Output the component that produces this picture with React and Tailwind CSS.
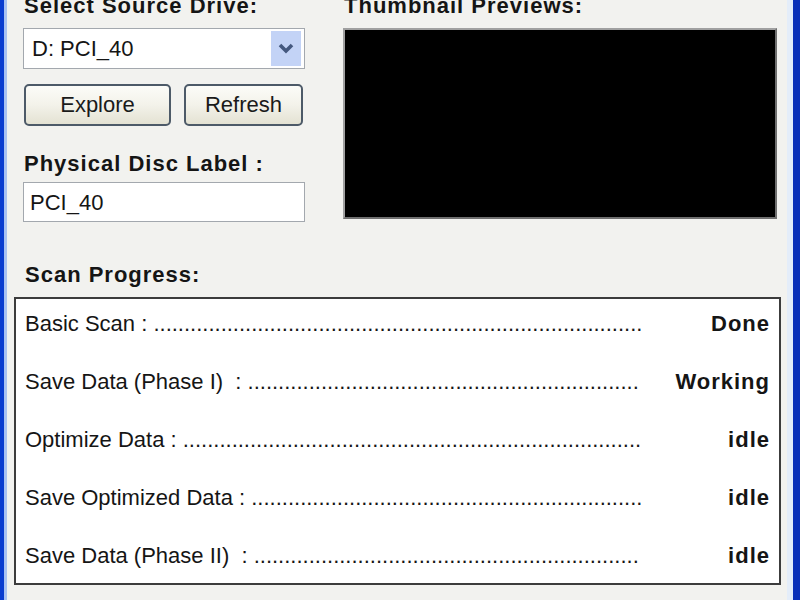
import React from 'react';

// dot leaders are sized per row so each one stops short of the status column
const steps = [
  { label: 'Basic Scan :', dots: 80, status: 'Done' },
  { label: 'Save Data (Phase I)  :', dots: 64, status: 'Working' },
  { label: 'Optimize Data :', dots: 75, status: 'idle' },
  { label: 'Save Optimized Data :', dots: 64, status: 'idle' },
  { label: 'Save Data (Phase II)  :', dots: 63, status: 'idle' },
];

const Heading = ({ children, className = '' }) => (
  <div className={`text-[22px] leading-[22px] font-bold tracking-[1px] whitespace-nowrap ${className}`}>
    {children}
  </div>
);

const XpButton = ({ children, width }) => (
  <button
    className={`${width} h-[42px] rounded-[5px] border-2 border-[#4d5a68] bg-gradient-to-b from-[#fcfcf8] via-[#f3f2ea] to-[#e4e2d3] text-[22px] leading-none text-[#1a1a1a]`}
  >
    {children}
  </button>
);

const ScanRow = ({ label, dots, status }) => (
  <div className="flex h-[22px] items-center leading-[22px]">
    <div className="w-[617px] whitespace-pre">
      {label} {'.'.repeat(dots)}
    </div>
    <div className="flex-1 pr-[9px] text-right font-bold tracking-[1px]">{status}</div>
  </div>
);

export default function App() {
  return (
    <div className="flex h-[600px] w-[800px] overflow-hidden bg-[#f2f2ef] font-['Liberation_Sans',Arial,sans-serif] text-[#151515]">
      {/* window frame, left */}
      <div className="w-[4px] bg-[#0a3ccf]" />
      <div className="w-[3px] bg-[#a9c2f2]" />

      <main className="flex flex-1 flex-col">
        <div className="-mt-[5px] flex">
          {/* drive selection */}
          <div className="ml-[16px] flex w-[282px] flex-col">
            <Heading className="pl-[1px]">Select Source Drive:</Heading>
            <div className="mt-[11px] flex h-[41px] items-stretch border border-[#a3a8ae] bg-white">
              <div className="flex flex-1 items-center pl-[8px] text-[22px]">D: PCI_40</div>
              <div className="my-[2px] mr-[3px] flex w-[30px] items-center justify-center bg-[#c3d3f6]">
                <svg width="16" height="11" viewBox="0 0 16 11">
                  <polyline points="2,2 8,8 14,2" fill="none" stroke="#44587f" strokeWidth="3.6" />
                </svg>
              </div>
            </div>
            <div className="mt-[15px] flex gap-[13px] pl-[1px]">
              <XpButton width="w-[147px]">Explore</XpButton>
              <XpButton width="w-[119px]">Refresh</XpButton>
            </div>
            <Heading className="mt-[27px] pl-[1px]">Physical Disc Label :</Heading>
            <div className="mt-[7px] flex h-[40px] items-center border border-[#a3a8ae] bg-white pl-[6px] text-[22px]">
              PCI_40
            </div>
          </div>

          {/* preview pane */}
          <div className="ml-[38px] flex w-[434px] flex-col">
            <Heading className="pl-[1px]">Thumbnail Previews:</Heading>
            <div className="mt-[11px] h-[191px] border-2 border-t-[#a0a0a0] border-l-[#a0a0a0] border-r-[#707070] border-b-[#707070] bg-black" />
          </div>
        </div>

        <Heading className="ml-[18px] mt-[42px]">Scan Progress:</Heading>
        <div className="ml-[7px] mt-[11px] flex h-[288px] w-[767px] flex-col gap-[36px] border-2 border-[#3c3c3c] bg-white pl-[9px] pt-[14px] text-[22px]">
          {steps.map((s) => (
            <ScanRow key={s.label} label={s.label} dots={s.dots} status={s.status} />
          ))}
        </div>
      </main>

      {/* window frame, right */}
      <div className="w-[6px] bg-[#e4edf9]" />
      <div className="w-[7px] bg-[#0a30b8]" />
    </div>
  );
}
